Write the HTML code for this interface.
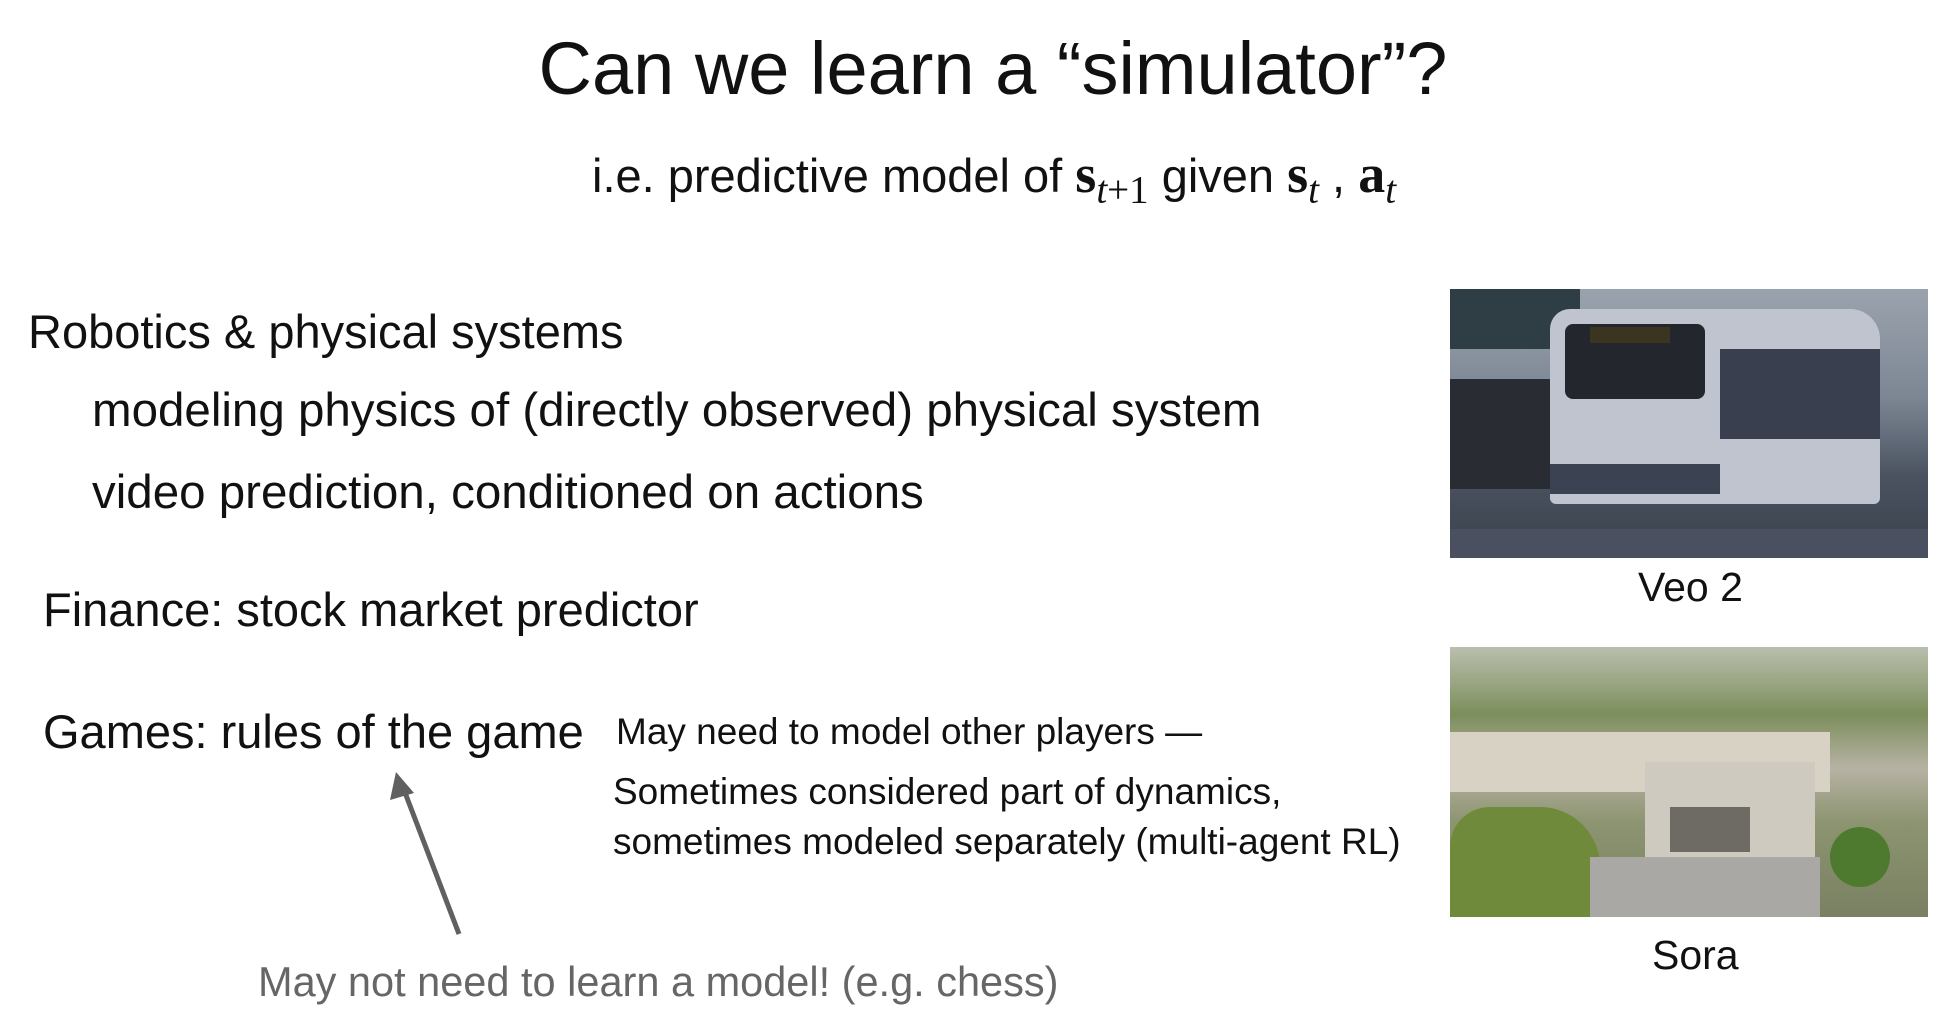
<!DOCTYPE html>
<html><head><meta charset="utf-8"><style>
html,body{margin:0;padding:0;background:#fff;}
body{width:1960px;height:1028px;position:relative;overflow:hidden;font-family:"Liberation Sans",sans-serif;color:#111;}
.t{position:absolute;white-space:nowrap;line-height:1;}
.m{font-family:"Liberation Serif",serif;}
</style></head><body>
<div class="t" style="left:0;width:1986px;text-align:center;top:32px;font-size:74px;">Can we learn a “simulator”?</div>
<div class="t" style="left:592px;top:147px;font-size:47px;">i.e. predictive model of <span class="m" style="font-weight:bold;font-size:54px;">s</span><sub class="m" style="font-style:italic;font-size:39px;">t</sub><sub class="m" style="font-size:39px;">+1</sub> given <span class="m" style="font-weight:bold;font-size:54px;">s</span><sub class="m" style="font-style:italic;font-size:39px;">t</sub> , <span class="m" style="font-weight:bold;font-size:54px;">a</span><sub class="m" style="font-style:italic;font-size:39px;">t</sub></div>
<div class="t" style="left:28px;top:308px;font-size:47px;">Robotics &amp; physical systems</div>
<div class="t" style="left:92px;top:387px;font-size:47.5px;">modeling physics of (directly observed) physical system</div>
<div class="t" style="left:92px;top:469px;font-size:47.5px;">video prediction, conditioned on actions</div>
<div class="t" style="left:43px;top:586px;font-size:47px;">Finance: stock market predictor</div>
<div class="t" style="left:43px;top:708px;font-size:47px;">Games: rules of the game</div>
<div class="t" style="left:616px;top:713px;font-size:37px;">May need to model other players —</div>
<div class="t" style="left:613px;top:773px;font-size:37px;">Sometimes considered part of dynamics,</div>
<div class="t" style="left:613px;top:823px;font-size:37px;">sometimes modeled separately (multi-agent RL)</div>
<div class="t" style="left:258px;top:961px;font-size:41.5px;color:#666;">May not need to learn a model! (e.g. chess)</div>
<svg style="position:absolute;left:0;top:0" width="1960" height="1028">
<line x1="459" y1="934" x2="404" y2="790" stroke="#606060" stroke-width="5"/>
<polygon points="396,772 390,800 414,793" fill="#606060"/>
</svg>
<div style="position:absolute;left:1450px;top:289px;width:478px;height:269px;overflow:hidden;background:linear-gradient(180deg,#9aa3ad 0%,#7d8794 40%,#4a5260 70%,#3a414c 100%);">
 <div style="position:absolute;left:0;top:0;width:130px;height:60px;background:#2e3e44;"></div>
 <div style="position:absolute;left:0;top:90px;width:110px;height:110px;background:#2a2c33;"></div>
 <div style="position:absolute;left:100px;top:20px;width:330px;height:195px;background:#c0c4ce;border-radius:20px 30px 6px 6px;"></div>
 <div style="position:absolute;left:115px;top:35px;width:140px;height:75px;background:#23262d;border-radius:8px;"></div>
 <div style="position:absolute;left:140px;top:38px;width:80px;height:16px;background:#3a3420;"></div>
 <div style="position:absolute;left:270px;top:60px;width:160px;height:90px;background:#3a3f50;"></div>
 <div style="position:absolute;left:100px;top:175px;width:170px;height:30px;background:#3b4252;"></div>
 <div style="position:absolute;left:0;top:240px;width:478px;height:29px;background:#4a5060;"></div>
</div>
<div class="t" style="left:1638px;top:567px;font-size:41px;">Veo 2</div>
<div style="position:absolute;left:1450px;top:647px;width:478px;height:270px;overflow:hidden;background:linear-gradient(180deg,#b9bfae 0%,#7c8e5c 25%,#b7b2a4 45%,#8c9470 65%,#7a8062 100%);">
 <div style="position:absolute;left:0;top:85px;width:380px;height:60px;background:#d8d2c4;"></div>
 <div style="position:absolute;left:195px;top:115px;width:170px;height:95px;background:#cfcac0;"></div>
 <div style="position:absolute;left:220px;top:160px;width:80px;height:45px;background:#6e6a64;"></div>
 <div style="position:absolute;left:0;top:160px;width:150px;height:110px;background:#6f8a3a;border-radius:40px 60px 0 0;"></div>
 <div style="position:absolute;left:380px;top:180px;width:60px;height:60px;background:#4e7a30;border-radius:50%;"></div>
 <div style="position:absolute;left:140px;top:210px;width:230px;height:60px;background:#a9a8a4;"></div>
</div>
<div class="t" style="left:1652px;top:935px;font-size:41px;">Sora</div>
</body></html>
